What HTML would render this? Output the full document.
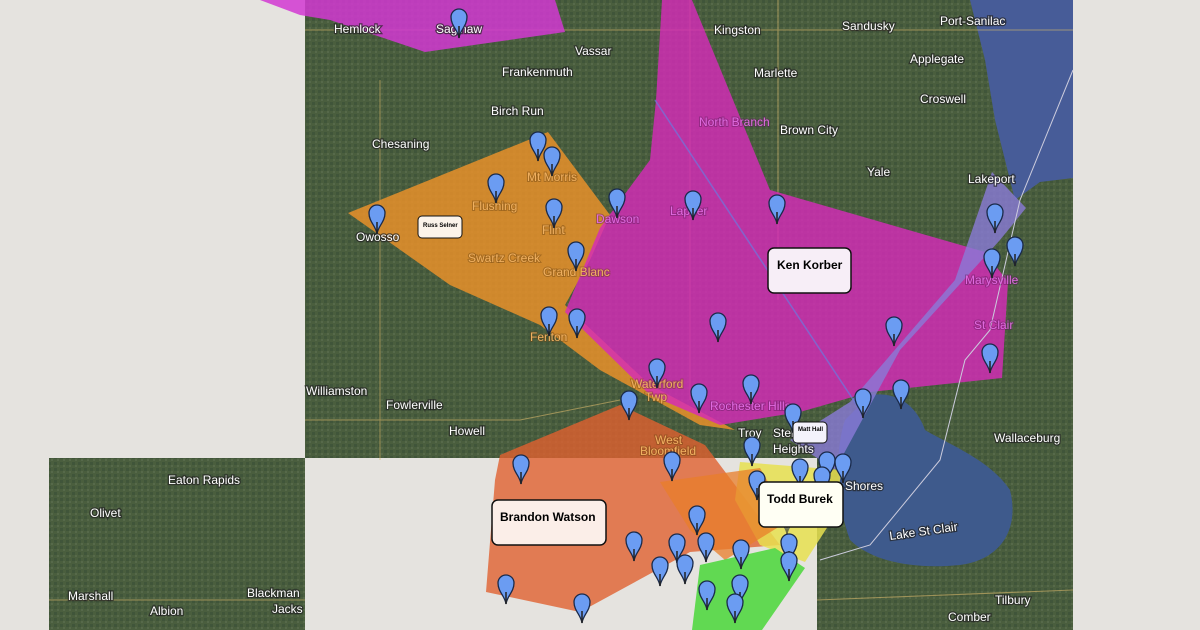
<!DOCTYPE html>
<html><head><meta charset="utf-8"><style>
html,body{margin:0;padding:0;width:1200px;height:630px;overflow:hidden;background:#e5e3df;font-family:"Liberation Sans",sans-serif}
svg{position:absolute;left:0;top:0}
.t{font-size:12px;fill:#fff;stroke:#222;stroke-width:2.5px;paint-order:stroke;stroke-opacity:.7}
.tm{font-size:12px;fill:#e06ae0;stroke:#5a1a5a;stroke-width:2px;paint-order:stroke;stroke-opacity:.4}
.to{font-size:12px;fill:#f0b060;stroke:#6a4010;stroke-width:2px;paint-order:stroke;stroke-opacity:.4}
.lb{font-weight:bold;fill:#000}
</style></head><body>
<svg width="1200" height="630" viewBox="0 0 1200 630">
<defs>
<pattern id="tx" width="6" height="6" patternUnits="userSpaceOnUse"><rect width="6" height="6" fill="#4a5e3e"/><rect width="3" height="3" fill="#40553a"/><rect x="3" y="3" width="2" height="2" fill="#56694a"/></pattern>
<g id="m"><path d="M0,22 C-1,14 -8,10 -8,1 A8,8 0 1 1 8,1 C8,10 1,14 0,22Z" fill="#6b9cf2" stroke="#1a2a4a" stroke-width="1.3"/><line x1="0" y1="10" x2="0" y2="22" stroke="#222" stroke-width="1.5"/></g>
</defs>
<rect x="305" y="0" width="768" height="458" fill="url(#tx)"/>
<rect x="49" y="458" width="256" height="172" fill="url(#tx)"/>
<rect x="817" y="458" width="256" height="172" fill="url(#tx)"/>
<path d="M970,0 L1073,0 L1073,178 L1040,182 L1015,200 L1005,160 L995,120 L985,60Z" fill="#475c98"/>
<path d="M870,395 C905,390 920,415 925,430 C950,445 990,460 1010,490 C1020,530 1000,560 960,565 C910,570 870,560 850,540 C835,500 835,450 845,420Z" fill="#3e5a8c"/>
<g fill="none" stroke="#d9b86a" stroke-width="1" opacity=".6">
<path d="M305,30 L1073,30"/><path d="M380,80 L380,460"/><path d="M305,420 L520,420 L620,400"/><path d="M778,0 L778,300"/><path d="M690,0 L690,400"/><path d="M49,600 L305,600"/><path d="M817,600 L1073,590"/>
</g>
<path d="M260,0 L555,0 L565,32 L425,52 L330,20 L300,15Z" fill="#d238d2" opacity=".85"/>
<path d="M348,213 L548,132 L610,215 L590,260 L565,305 L650,385 L735,430 L700,425 L600,370 L540,325 L450,285Z" fill="#e8912a" opacity=".85"/>
<path d="M662,0 L692,0 L770,190 L985,252 L1008,282 L1002,378 L870,392 L800,412 L720,425 L650,395 L565,312 L600,228 L650,160 L656,100Z" fill="#d62bb8" opacity=".82"/>
<path d="M992,172 L1026,208 L1000,240 L900,350 L835,470 L790,440 L850,402 L955,280Z" fill="#8a7ad8" opacity=".8"/>
<path d="M500,455 L620,405 L705,445 L780,545 L690,552 L580,612 L486,592 L495,480Z" fill="#e06030" opacity=".8"/>
<path d="M740,462 L842,470 L832,520 L805,562 L760,545 L735,500Z" fill="#e8e050" opacity=".85"/>
<path d="M660,482 L760,468 L790,520 L725,560 L690,530Z" fill="#e87e2a" opacity=".75"/>
<path d="M700,565 L775,548 L805,568 L762,630 L692,630Z" fill="#5ad84a" opacity=".95"/>
<path d="M655,100 L860,410" stroke="#6a7ae0" stroke-width="1.5" opacity=".7"/>
<path d="M1073,70 L1020,200 L990,330 L965,360 L940,460 L870,545 L820,560" stroke="#ccd" stroke-width="1" fill="none"/>
<g class="t">
<text x="334" y="33">Hemlock</text><text x="436" y="33">Saginaw</text><text x="575" y="55">Vassar</text><text x="714" y="34">Kingston</text><text x="842" y="30">Sandusky</text><text x="940" y="25">Port-Sanilac</text>
<text x="502" y="76">Frankenmuth</text><text x="754" y="77">Marlette</text><text x="910" y="63">Applegate</text><text x="920" y="103">Croswell</text>
<text x="491" y="115">Birch Run</text><text x="780" y="134">Brown City</text><text x="372" y="148">Chesaning</text><text x="867" y="176">Yale</text><text x="968" y="183">Lakeport</text>
<text x="356" y="241">Owosso</text><text x="306" y="395">Williamston</text><text x="386" y="409">Fowlerville</text><text x="449" y="435">Howell</text>
<text x="994" y="442">Wallaceburg</text><text x="845" y="490">Shores</text><text x="890" y="540" transform="rotate(-8 890 540)">Lake St Clair</text>
<text x="168" y="484">Eaton Rapids</text><text x="90" y="517">Olivet</text><text x="68" y="600">Marshall</text><text x="150" y="615">Albion</text><text x="247" y="597">Blackman</text><text x="272" y="613">Jacks</text>
<text x="995" y="604">Tilbury</text><text x="948" y="621">Comber</text><text x="738" y="437">Troy</text><text x="773" y="437">Sterling</text><text x="773" y="453">Heights</text>
</g>
<g class="to"><text x="472" y="210">Flushing</text><text x="527" y="181">Mt Morris</text><text x="542" y="234">Flint</text><text x="468" y="262">Swartz Creek</text><text x="543" y="276">Grand Blanc</text><text x="530" y="341">Fenton</text><text x="631" y="388">Waterford</text><text x="645" y="401">Twp</text><text x="655" y="444">West</text><text x="640" y="455">Bloomfield</text></g>
<g class="tm"><text x="596" y="223">Dawson</text><text x="670" y="215">Lapeer</text><text x="699" y="126">North Branch</text><text x="965" y="284">Marysville</text><text x="974" y="329">St Clair</text><text x="710" y="410">Rochester Hills</text></g>
<g>
<use href="#m" x="459" y="16"/><use href="#m" x="377" y="212"/><use href="#m" x="496" y="181"/><use href="#m" x="538" y="139"/><use href="#m" x="552" y="154"/><use href="#m" x="554" y="206"/><use href="#m" x="576" y="249"/><use href="#m" x="617" y="196"/><use href="#m" x="693" y="198"/><use href="#m" x="777" y="202"/><use href="#m" x="995" y="211"/><use href="#m" x="1015" y="244"/><use href="#m" x="992" y="256"/><use href="#m" x="549" y="314"/><use href="#m" x="577" y="316"/><use href="#m" x="718" y="320"/><use href="#m" x="894" y="324"/><use href="#m" x="990" y="351"/><use href="#m" x="657" y="366"/><use href="#m" x="629" y="398"/><use href="#m" x="699" y="391"/><use href="#m" x="751" y="382"/><use href="#m" x="863" y="396"/><use href="#m" x="901" y="387"/><use href="#m" x="793" y="411"/><use href="#m" x="752" y="444"/><use href="#m" x="672" y="459"/><use href="#m" x="521" y="462"/><use href="#m" x="757" y="478"/><use href="#m" x="800" y="466"/><use href="#m" x="827" y="459"/><use href="#m" x="843" y="461"/><use href="#m" x="822" y="474"/><use href="#m" x="697" y="513"/><use href="#m" x="634" y="539"/><use href="#m" x="677" y="541"/><use href="#m" x="706" y="540"/><use href="#m" x="741" y="547"/><use href="#m" x="789" y="541"/><use href="#m" x="789" y="559"/><use href="#m" x="660" y="564"/><use href="#m" x="685" y="562"/><use href="#m" x="506" y="582"/><use href="#m" x="582" y="601"/><use href="#m" x="707" y="588"/><use href="#m" x="740" y="582"/><use href="#m" x="735" y="601"/><use href="#m" x="787" y="512" opacity=".6"/>
</g>
<g stroke="#111" stroke-width="1.5">
<rect x="768" y="248" width="83" height="45" rx="6" fill="#f7eef7"/>
<rect x="492" y="500" width="114" height="45" rx="6" fill="#fbeee8"/>
<rect x="759" y="482" width="84" height="45" rx="6" fill="#fffff4"/>
<rect x="418" y="216" width="44" height="22" rx="4" fill="#fbf3ea" stroke-width="1"/>
<rect x="793" y="422" width="34" height="21" rx="4" fill="#f4f2fb" stroke-width="1"/>
</g>
<g class="lb"><text x="777" y="269" font-size="12">Ken Korber</text><text x="500" y="521" font-size="12">Brandon Watson</text><text x="767" y="503" font-size="12">Todd Burek</text><text x="423" y="227" font-size="6">Russ Selner</text><text x="798" y="431" font-size="6">Matt Hall</text></g>
</svg>
</body></html>
